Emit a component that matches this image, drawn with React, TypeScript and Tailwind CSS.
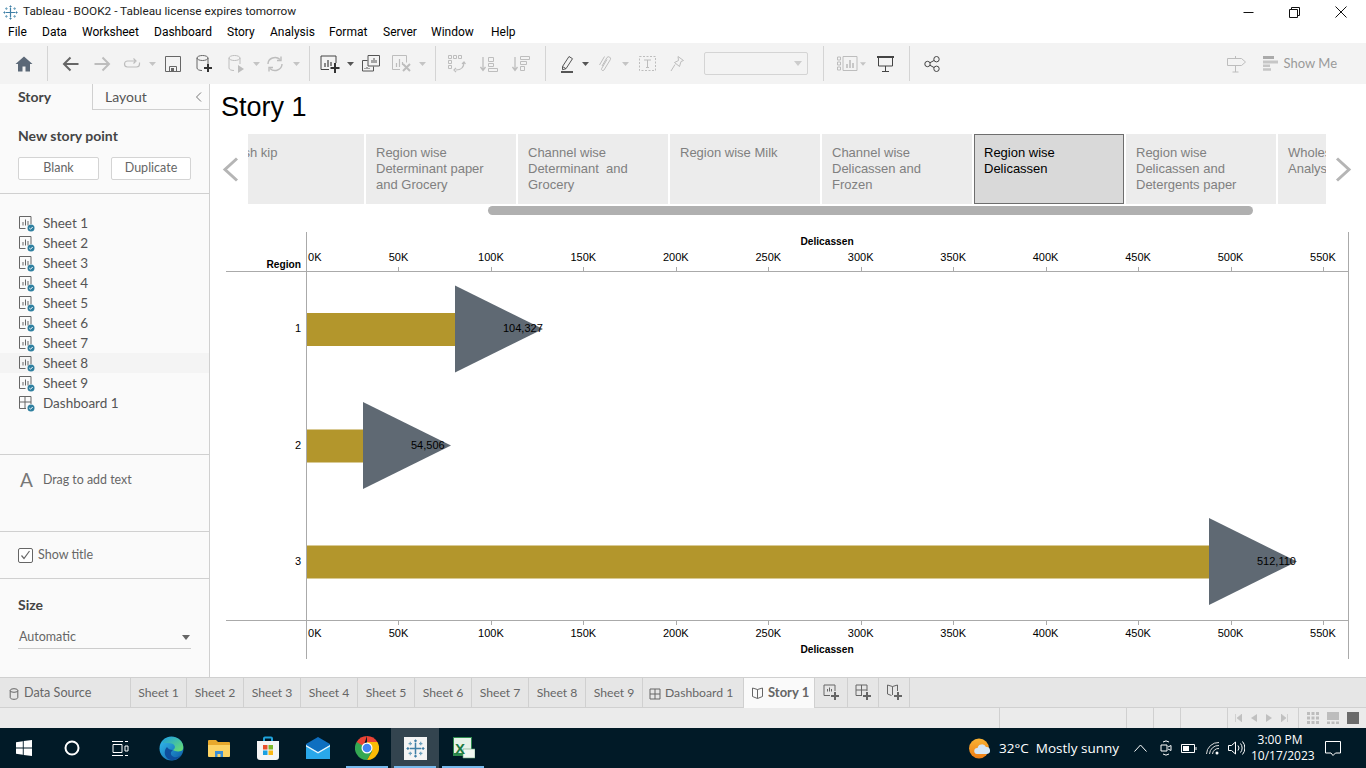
import React from 'react';

const OFF = '#bdbdbd';

const Icon: React.FC<{ w?: number; h?: number; children: React.ReactNode }> = ({ w = 24, h = 24, children }) => (
  <svg width={w} height={h} viewBox={`0 0 ${w} ${h}`} fill="none" className="block shrink-0">
    {children}
  </svg>
);

const Sep = () => <div className="w-px h-[35px] bg-[#d4d4d4] shrink-0" />;

const Drop: React.FC<{ dark?: boolean; className: string }> = ({ dark, className }) => (
  <div className={`flex justify-center items-center shrink-0 ${className}`}>
    <svg width="7" height="4" viewBox="0 0 7 4">
      <path d="M0 0h7L3.5 4z" fill={dark ? '#555' : '#c4c4c4'} />
    </svg>
  </div>
);

const Cell: React.FC<{ className: string; children?: React.ReactNode }> = ({ className, children }) => (
  <div className={`flex justify-center items-center shrink-0 ${className}`}>{children}</div>
);

const TableauLogo: React.FC<{ size: number; color?: string }> = ({ size, color = '#3f7fa6' }) => (
  <svg width={size} height={size} viewBox="0 0 20 20" className="block">
    <g stroke={color} strokeWidth="1.2">
      <path d="M10 4v12M4 10h12" strokeWidth="1.6" />
      <path d="M10 0.5v3M8.5 2h3M10 16.5v3M8.5 18h3M0.5 10h3M2 8.5v3M16.5 10h3M18 8.5v3" />
      <path d="M4.5 3v3.6M2.7 4.8h3.6M15.5 3v3.6M13.7 4.8h3.6M4.5 13.4V17M2.7 15.2h3.6M15.5 13.4V17M13.7 15.2h3.6" stroke="#6aa0bd" />
    </g>
  </svg>
);

const SheetIcon = () => (
  <svg width="17" height="17" viewBox="0 0 17 17" className="block">
    <path d="M7.5 13.5H1.5V1.5h11.5v7.5" fill="none" stroke="#666" />
    <path d="M5 7v3.5M7.5 4.5v6M10 6v4.5" stroke="#666" />
    <circle cx="13" cy="13" r="3.5" fill="#2f7f9f" />
    <path d="M11.3 13l1.2 1.2 2.2-2.2" stroke="#fff" fill="none" />
  </svg>
);

const DashIcon = () => (
  <svg width="17" height="17" viewBox="0 0 17 17" className="block">
    <path d="M8 13.5H1.5V1.5h11.5v7.5M7 1.5v12M1.5 7h11.5" fill="none" stroke="#666" />
    <circle cx="13" cy="13" r="3.5" fill="#2f7f9f" />
    <path d="M11.3 13l1.2 1.2 2.2-2.2" stroke="#fff" fill="none" />
  </svg>
);

const sideSheets = ['Sheet 1', 'Sheet 2', 'Sheet 3', 'Sheet 4', 'Sheet 5', 'Sheet 6', 'Sheet 7', 'Sheet 8', 'Sheet 9'];

const Sidebar = () => (
  <aside className="w-[210px] shrink-0 bg-[#fafafa] border-r border-[#d0d0d0] flex flex-col font-['Lato',sans-serif] text-[#555] text-[13.5px]">
    <div className="flex h-[26px] shrink-0">
      <div className="w-[92px] pl-[18px] font-bold text-[#444] leading-[26px] text-[14px]">Story</div>
      <div className="flex-1 border-l border-b border-[#d0d0d0] flex items-center justify-between pl-[12px] pr-[7px] text-[14px] text-[#555]">
        <span>Layout</span>
        <svg width="7" height="10" viewBox="0 0 7 10"><path d="M6 0.5L1.5 5 6 9.5" fill="none" stroke="#777" /></svg>
      </div>
    </div>
    <div className="h-[84px] shrink-0 border-b border-[#d0d0d0] px-[18px]">
      <div className="font-bold text-[#444] mt-[17px] leading-[18px] text-[14px]">New story point</div>
      <div className="flex gap-[12px] mt-[12px]">
        <button className="w-[81px] h-[23px] bg-white border border-[#d4d4d4] rounded-[2px] text-[12.5px] text-[#666]">Blank</button>
        <button className="w-[80px] h-[23px] bg-white border border-[#d4d4d4] rounded-[2px] text-[12.5px] text-[#666]">Duplicate</button>
      </div>
    </div>
    <div className="h-[261px] shrink-0 border-b border-[#d0d0d0] pt-[19px]">
      {sideSheets.map((s) => (
        <div key={s} className={`h-[20px] flex items-center pl-[18px] gap-[8px] ${s === 'Sheet 8' ? 'bg-[#f4f4f4]' : ''}`}>
          <SheetIcon />
          <span>{s}</span>
        </div>
      ))}
      <div className="h-[20px] flex items-center pl-[18px] gap-[8px]">
        <DashIcon />
        <span>Dashboard 1</span>
      </div>
    </div>
    <div className="h-[77px] shrink-0 border-b border-[#d0d0d0] flex items-start pl-[20px] pt-[13px] gap-[10px]">
      <span className="text-[19px] leading-[24px] text-[#777]">A</span>
      <span className="text-[12.4px] leading-[24px] text-[#666]">Drag to add text</span>
    </div>
    <div className="h-[47px] shrink-0 border-b border-[#d0d0d0] flex items-center pl-[18px] gap-[5px]">
      <div className="w-[15px] h-[15px] border border-[#666] rounded-[2px] bg-white flex items-center justify-center">
        <svg width="11" height="10" viewBox="0 0 11 10"><path d="M1.5 5.5L4 8.5 9.5 1" fill="none" stroke="#666" strokeWidth="1.2" /></svg>
      </div>
      <span className="text-[12.5px] text-[#666]">Show title</span>
    </div>
    <div className="flex-1 px-[18px]">
      <div className="font-bold text-[#444] mt-[16px] leading-[20px] text-[14px]">Size</div>
      <div className="mt-[11px] h-[23px] border-b border-[#ccc] flex items-center justify-between pl-px pr-[1px] text-[12.5px] text-[#666]">
        <span>Automatic</span>
        <svg width="8" height="5" viewBox="0 0 8 5"><path d="M0 0h8L4 5z" fill="#666" /></svg>
      </div>
    </div>
  </aside>
);

const stories = [
  'Fresh kip',
  'Region wise\nDeterminant paper\nand Grocery',
  'Channel wise\nDeterminant  and\nGrocery',
  'Region wise Milk',
  'Channel wise\nDelicassen and\nFrozen',
  'Region wise\nDelicassen',
  'Region wise\nDelicassen and\nDetergents paper',
  'Wholesale\nAnalysis',
];

const StoryNav = () => (
  <div className="flex h-[70px] font-['Liberation_Sans',sans-serif] text-[13px] leading-[16px]">
    <div className="w-[38px] shrink-0 flex items-center pl-[12px]">
      <svg width="17" height="25" viewBox="0 0 17 25"><path d="M15 1.5L3 12.5l12 11" fill="none" stroke="#b5b5b5" strokeWidth="3" /></svg>
    </div>
    <div className="w-[1078px] shrink-0 overflow-hidden flex gap-[2px]">
      {stories.map((s, i) => (
        <div
          key={s}
          className={`w-[150px] h-[70px] shrink-0 whitespace-pre overflow-hidden ${i === 0 ? '-ml-[34px]' : ''} ${
            i === 5
              ? 'bg-[#d9d9d9] border border-[#6e6e6e] text-black pt-[10px] pl-[9px]'
              : 'bg-[#ececec] text-[#808080] pt-[11px] pl-[10px]'
          }`}
        >
          {s}
        </div>
      ))}
    </div>
    <div className="w-[40px] shrink-0 flex items-center pl-[9px]">
      <svg width="17" height="25" viewBox="0 0 17 25"><path d="M2 1.5l12 11-12 11" fill="none" stroke="#b5b5b5" strokeWidth="3" /></svg>
    </div>
  </div>
);

const ticks = [0, 50, 100, 150, 200, 250, 300, 350, 400, 450, 500, 550];
const tickX = (k: number) => 306 + (k / 50) * 92.45;

const rows = [
  { label: '1', value: '104,327', y: 329, end: 455 },
  { label: '2', value: '54,506', y: 445.5, end: 363 },
  { label: '3', value: '512,110', y: 561.5, end: 1209 },
];

const Chart = () => (
  <svg viewBox="210 225 1156 452" className="block w-[1156px] h-[452px] mt-[10px]" fontFamily="'Liberation Sans', sans-serif" fill="#000">
    <path d="M306.5 232v427M1348.5 232v427M226 271.5h1123M226 620.5h1123" stroke="#aaa" fill="none" />
    <text x="827" y="245" fontSize="10.2" fontWeight="700" textAnchor="middle">Delicassen</text>
    <text x="827" y="653" fontSize="10.2" fontWeight="700" textAnchor="middle">Delicassen</text>
    <text x="301" y="268" fontSize="10.2" fontWeight="700" textAnchor="end">Region</text>
    {ticks.map((k) => {
      const x = tickX(k);
      const anchor = k === 0 ? 'start' : 'middle';
      const tx = k === 0 ? 308 : x;
      return (
        <g key={k}>
          {k > 0 && <path d={`M${Math.round(x) + 0.5} 267v4M${Math.round(x) + 0.5} 621v4`} stroke="#aaa" />}
          <text x={tx} y="261" fontSize="11" textAnchor={anchor}>{k}K</text>
          <text x={tx} y="637" fontSize="11" textAnchor={anchor}>{k}K</text>
        </g>
      );
    })}
    {rows.map((r) => (
      <g key={r.label}>
        <rect x="307" y={r.y - 16} width={r.end - 307 + 1} height="33" fill="#b3962c" />
        <path d={`M${r.end} ${r.y - 43.5}L${r.end + 88} ${r.y}L${r.end} ${r.y + 43.5}z`} fill="#5f6973" />
        <text x={r.end + 48} y={r.y + 3} fontSize="11">{r.value}</text>
        <text x="301" y={r.y + 3} fontSize="11" textAnchor="end">{r.label}</text>
      </g>
    ))}
  </svg>
);

const Toolbar = () => (
  <div className="h-[41px] bg-[#f3f3f3] flex items-center shrink-0 font-['Lato',sans-serif]">
    <Cell className="w-[47px]">
      <Icon w={18} h={16}><path d="M9 0.5L0.5 8H3v7.5h4.5V10.5h3v5H15V8h2.5z" fill="#5b6877" /></Icon>
    </Cell>
    <Sep />
    <Cell className="w-[44px]">
      <Icon w={17} h={16}><path d="M16.5 8H2M8.5 1.5L2 8l6.5 6.5" stroke="#666" strokeWidth="2" /></Icon>
    </Cell>
    <Cell className="w-[20px]">
      <Icon w={17} h={16}><path d="M0.5 8H15M8.5 1.5L15 8l-6.5 6.5" stroke={OFF} strokeWidth="2" /></Icon>
    </Cell>
    <Cell className="w-[28px] ml-[6px]">
      <Icon w={18} h={12}><path d="M12 3H4.5a3 3 0 000 6h9a3 3 0 003-3V4.5M10.5 0.5l2.5 2.5-2.5 2.5" stroke={OFF} strokeWidth="1.2" /></Icon>
    </Cell>
    <Drop className="w-[12px]" />
    <Cell className="w-[30px]">
      <Icon w={16} h={16}><path d="M0.5 0.5h15v15h-15zM4.5 15.5v-5h7v5" stroke="#666" /><rect x="6" y="12" width="3" height="3" fill="#666" /></Icon>
    </Cell>
    <Cell className="w-[34px]">
      <Icon w={18} h={18}>
        <ellipse cx="6.5" cy="3" rx="5.5" ry="2.5" stroke="#666" />
        <path d="M1 3v10c0 1.4 2 2.5 5 2.5M12 3v6" stroke="#666" />
        <path d="M12 9v8M8 13h8" stroke="#333" strokeWidth="2" />
      </Icon>
    </Cell>
    <Cell className="w-[28px]">
      <Icon w={17} h={18}>
        <ellipse cx="6.5" cy="3" rx="5.5" ry="2.5" stroke={OFF} />
        <path d="M1 3v10c0 1.4 2 2.5 5 2.5M12 3v6" stroke={OFF} />
        <path d="M10 10l6 4-6 4z" fill={OFF} />
      </Icon>
    </Cell>
    <Drop className="w-[12px]" />
    <Cell className="w-[26px]">
      <Icon w={18} h={16}><path d="M2 8a7 6.5 0 0112-4.5M16 8a7 6.5 0 01-12 4.5" stroke={OFF} strokeWidth="1.4" /><path d="M15 0.5v4h-4M3 15.5v-4h4" stroke={OFF} strokeWidth="1.4" /></Icon>
    </Cell>
    <Drop className="w-[16px]" />
    <div className="w-[5px] shrink-0" />
    <Sep />
    <Cell className="w-[30px] ml-[5px]">
      <Icon w={21} h={18}>
        <path d="M9 14.5H1V1h15v7" stroke="#444" />
        <path d="M5 8v4M8 5v7M11 7v4" stroke="#444" strokeWidth="1.2" />
        <path d="M15 8v10M10.5 13h9" stroke="#333" strokeWidth="2" />
      </Icon>
    </Cell>
    <Drop dark className="w-[10px]" />
    <Cell className="w-[32px]">
      <Icon w={18} h={17}>
        <path d="M6 0.5h11.5v10.5H6zM0.5 5.5h5M0.5 5.5v10.5h11v-4.5" stroke="#555" />
        <path d="M10 8V5M12 8V3M14 8V5M3 13v1M5 12v2M7 13v1" stroke="#555" />
      </Icon>
    </Cell>
    <Cell className="w-[30px]">
      <Icon w={20} h={17}>
        <path d="M8 14.5H0.5V0.5h14v7" stroke={OFF} />
        <path d="M4.5 8v4M7.5 4v8M10.5 7v3" stroke={OFF} strokeWidth="1.2" />
        <path d="M11 9l7 7M18 9l-7 7" stroke={OFF} strokeWidth="2" />
      </Icon>
    </Cell>
    <Drop className="w-[10px]" />
    <div className="w-[8px] shrink-0" />
    <Sep />
    <Cell className="w-[42px]">
      <Icon w={18} h={18}>
        <path d="M0.5 0.5h3v3h-3zM5.5 0.5h3v3h-3zM10.5 0.5h3v3h-3zM0.5 5.5h3v3h-3zM0.5 10.5h3v3h-3z" stroke={OFF} />
        <path d="M16 7c0 5-3 8-8 8M8 13l-2 2 2 2M14 9l2-2 1.5 2" stroke={OFF} strokeWidth="1.2" />
      </Icon>
    </Cell>
    <Cell className="w-[22px]">
      <Icon w={18} h={16}>
        <path d="M3 1v13M0.5 11L3 14.5 5.5 11" stroke={OFF} strokeWidth="1.3" />
        <path d="M8.5 1.5h5v4h-5zM8.5 7.5h5v3h-5zM8.5 12.5h9v3h-9z" stroke={OFF} />
      </Icon>
    </Cell>
    <Cell className="w-[42px]">
      <Icon w={18} h={16}>
        <path d="M3 1v13M0.5 11L3 14.5 5.5 11" stroke={OFF} strokeWidth="1.3" />
        <path d="M8.5 0.5h9v3h-9zM8.5 5.5h6v3h-6zM8.5 10.5h4v4h-4z" stroke={OFF} />
      </Icon>
    </Cell>
    <div className="w-[3px] shrink-0" />
    <Sep />
    <Cell className="w-[26px] ml-[9px]">
      <Icon w={14} h={18}>
        <path d="M1.5 11.5L8 1.5l3.5 2.2-6.5 10-3.5 1z" stroke="#555" />
        <path d="M1.5 11.5l3.5 2.2" stroke="#555" />
        <path d="M0 17h12" stroke="#555" strokeWidth="2" />
      </Icon>
    </Cell>
    <Drop dark className="w-[8px]" />
    <Cell className="w-[32px]">
      <Icon w={14} h={17}>
        <path d="M4 11l5-8.5a2 2 0 013.4 2L6 15a1.4 1.4 0 01-2.4-1.4L9 4.5M1.5 10L6.5 1.5" stroke={OFF} />
      </Icon>
    </Cell>
    <Drop className="w-[8px]" />
    <Cell className="w-[36px]">
      <Icon w={17} h={15}>
        <path d="M0.5 0.5h16v14h-16z" stroke={OFF} strokeDasharray="2 1.5" />
        <path d="M5 4h7M8.5 4v7.5M7 11.5h3" stroke={OFF} />
      </Icon>
    </Cell>
    <Cell className="w-[24px]">
      <Icon w={14} h={16}>
        <path d="M8 0.5l5.5 4-2.5 1-1.5 5-5-4 4-2zM5 8.5L1 15" stroke={OFF} />
      </Icon>
    </Cell>
    <div className="ml-[15px] w-[104px] h-[23px] shrink-0 border border-[#d4d4d4] rounded-[2px] flex items-center justify-end pr-[5px]">
      <svg width="8" height="5" viewBox="0 0 8 5"><path d="M0 0h8L4 5z" fill="#ccc" /></svg>
    </div>
    <div className="w-[15px] shrink-0" />
    <Sep />
    <Cell className="w-[26px] ml-[10px]">
      <Icon w={21} h={15}>
        <path d="M0.5 1h3v3h-3zM0.5 6h3v3h-3zM0.5 11h3v3h-3zM6 0.5h14v14H6z" stroke={OFF} />
        <path d="M10 12V8M13 12V4M16 12V7" stroke={OFF} strokeWidth="1.6" />
      </Icon>
    </Cell>
    <Drop className="w-[6px]" />
    <Cell className="w-[38px]">
      <Icon w={17} h={16}>
        <path d="M0 1h17" stroke="#444" strokeWidth="2" />
        <path d="M1.5 2v8h14V2M8.5 10v5.500M5 15.500h7" stroke="#444" />
      </Icon>
    </Cell>
    <div className="w-[5px] shrink-0" />
    <Sep />
    <Cell className="w-[44px]">
      <Icon w={16} h={16}>
        <circle cx="3.5" cy="8" r="2.7" stroke="#444" />
        <circle cx="12.5" cy="3.2" r="2.7" stroke="#444" />
        <circle cx="12.5" cy="12.8" r="2.7" stroke="#444" />
        <path d="M6 6.7l4-2.2M6 9.3l4 2.2" stroke="#444" />
      </Icon>
    </Cell>
    <div className="flex-1" />
    <Icon w={19} h={18}>
      <path d="M0.5 3.5h14l4 3.5-4 3.5h-14zM8.5 1v2.5M8.5 10.5V17M5.5 17h6" stroke={OFF} />
    </Icon>
    <div className="w-[17px] shrink-0" />
    <Icon w={15} h={15}>
      <path d="M0 1.5h11" stroke="#aaa" strokeWidth="3" />
      <path d="M0 6h15" stroke="#c6c6c6" strokeWidth="3" />
      <path d="M0 9.8h7M0 13.5h8" stroke="#c6c6c6" strokeWidth="2.6" />
    </Icon>
    <span className="ml-[6px] mr-[29px] text-[13px] text-[#9a9a9a]">Show Me</span>
  </div>
);

const Menu = () => (
  <div className="h-[22px] flex items-center pl-[8px] bg-white text-[12px] text-black font-['Roboto',sans-serif] shrink-0">
    <span className="w-[34px]">File</span>
    <span className="w-[40px]">Data</span>
    <span className="w-[72px]">Worksheet</span>
    <span className="w-[73px]">Dashboard</span>
    <span className="w-[43px]">Story</span>
    <span className="w-[59px]">Analysis</span>
    <span className="w-[54px]">Format</span>
    <span className="w-[48px]">Server</span>
    <span className="w-[60px]">Window</span>
    <span>Help</span>
  </div>
);

const TitleBar = () => (
  <div className="h-[21px] flex items-center bg-white shrink-0 pt-[3px]">
    <div className="ml-[3px]"><TableauLogo size={15} /></div>
    <span className="ml-[5px] text-[11.8px] text-[#222] font-['Roboto',sans-serif]">Tableau - BOOK2 - Tableau license expires tomorrow</span>
    <div className="flex-1" />
    <Icon w={11} h={11}><path d="M0.5 5.5h10" stroke="#111" /></Icon>
    <div className="w-[35px] shrink-0" />
    <Icon w={11} h={11}><path d="M0.5 2.5h8v8h-8zM2.5 2.5v-2h8v8h-2" stroke="#111" /></Icon>
    <div className="w-[35px] shrink-0" />
    <Icon w={12} h={12}><path d="M0.5 0.5l11 11M11.5 0.5l-11 11" stroke="#111" /></Icon>
    <div className="w-[19px] shrink-0" />
  </div>
);

const tabSheets = ['Sheet 1', 'Sheet 2', 'Sheet 3', 'Sheet 4', 'Sheet 5', 'Sheet 6', 'Sheet 7', 'Sheet 8', 'Sheet 9'];

const TabBar = () => (
  <div className="h-[31px] bg-[#e6e6e6] border-y border-[#d0d0d0] flex shrink-0 font-['Lato',sans-serif] text-[12.2px] text-[#666]">
    <div className="w-[130px] shrink-0 flex items-center pl-[9px] pt-[2px] gap-[5px] text-[12.6px]">
      <svg width="10" height="12" viewBox="0 0 10 12"><ellipse cx="5" cy="2.5" rx="3.8" ry="1.8" fill="none" stroke="#666" /><path d="M1.2 2.5v7c0 1 1.6 1.8 3.8 1.8s3.8-.8 3.8-1.8v-7" fill="none" stroke="#666" /></svg>
      <span>Data Source</span>
    </div>
    {tabSheets.map((s, i) => (
      <div key={s} className={`${i === 0 ? 'w-[56px]' : 'w-[57px]'} shrink-0 border-l border-[#d0d0d0] flex items-center justify-center pt-[2px]`}>
        {s}
      </div>
    ))}
    <div className="w-[101px] shrink-0 border-l border-[#d0d0d0] flex items-center pl-[6px] pt-[2px] gap-[4px]">
      <svg width="12" height="12" viewBox="0 0 12 12"><path d="M1 1h10v10H1zM6 1v10M1 6h10" fill="none" stroke="#666" /></svg>
      <span>Dashboard 1</span>
    </div>
    <div className="w-[71px] shrink-0 bg-[#fafafa] flex items-center pl-[7px] gap-[4px] font-bold text-[13px] -mb-px border-l border-[#d0d0d0]">
      <svg width="13" height="12" viewBox="0 0 13 12"><path d="M6.5 2.5L1.5 1v8.5l5 2 5-2V1zM6.5 2.5v9" fill="none" stroke="#666" /></svg>
      <span>Story 1</span>
    </div>
    <div className="w-[33px] shrink-0 border-l border-[#d0d0d0] flex items-center justify-center">
      <Icon w={17} h={17}><path d="M7 11.5H1V1h11v6" stroke="#666" /><path d="M4.5 7.5V5M6.5 7.5V3.5M8.5 7.5V5" stroke="#666" /><path d="M12 8v8M8 12h8" stroke="#666" strokeWidth="2" /></Icon>
    </div>
    <div className="w-[31px] shrink-0 border-l border-[#d0d0d0] flex items-center justify-center">
      <Icon w={17} h={17}><path d="M7 11.5H1V1h11v6M6.5 1v10.5M1 6h11" stroke="#666" /><path d="M12 8v8M8 12h8" stroke="#666" strokeWidth="2" /></Icon>
    </div>
    <div className="w-[32px] shrink-0 border-x border-[#d0d0d0] flex items-center justify-center">
      <Icon w={17} h={17}><path d="M6.5 2.5L1.5 1v9l4 1.5M6.5 2.5L11.5 1v6M6.5 2.5V11" stroke="#666" /><path d="M12 8v8M8 12h8" stroke="#666" strokeWidth="2" /></Icon>
    </div>
  </div>
);

const StatusBar = () => (
  <div className="h-[20px] bg-[#ebebeb] flex justify-end shrink-0">
    <div className="w-[127px] border-l border-[#d0d0d0]" />
    <div className="w-[27px] border-l border-[#d0d0d0]" />
    <div className="w-[27px] border-l border-[#d0d0d0]" />
    <div className="w-[47px] border-l border-[#d0d0d0]" />
    <div className="w-[71px] border-l border-[#d0d0d0] flex items-center pl-[7px] gap-[9px]">
      <Icon w={7} h={8}><path d="M0.5 0v8M7 0v8L2 4z" fill="#c0c0c0" stroke="#c0c0c0" strokeWidth="0.6" /></Icon>
      <Icon w={6} h={8}><path d="M6 0v8L0 4z" fill="#c0c0c0" /></Icon>
      <Icon w={6} h={8}><path d="M0 0v8l6-4z" fill="#c0c0c0" /></Icon>
      <Icon w={7} h={8}><path d="M6.5 0v8M0 0v8l5-4z" fill="#c0c0c0" stroke="#c0c0c0" strokeWidth="0.6" /></Icon>
    </div>
    <div className="w-[68px] border-l border-[#d0d0d0] flex items-center pl-[8px] gap-[8px]">
      <Icon w={12} h={12}>
        <path d="M0 0h3v3H0zM4.5 0h3v3h-3zM9 0h3v3H9zM0 4.500h3v3H0zM4.500 4.500h3v3h-3zM9 4.500h3v3H9zM0 9h3v3H0zM4.500 9h3v3h-3zM9 9h3v3H9z" fill="#bdbdbd" />
      </Icon>
      <Icon w={12} h={12}><path d="M0 0h12v8H0zM0 9.500h3V12H0zM4.500 9.500h3V12h-3zM9 9.500h3V12H9z" fill="#bdbdbd" /></Icon>
      <Icon w={12} h={12}><rect width="12" height="12" fill="#6b6b6b" /></Icon>
    </div>
  </div>
);

const TaskIcon: React.FC<{ className?: string; bar?: boolean; children: React.ReactNode }> = ({ className = '', bar, children }) => (
  <div className={`relative w-[48px] h-[40px] flex items-center justify-center shrink-0 ${className}`}>
    {children}
    {bar && <div className="absolute bottom-0 left-[3px] right-[3px] h-[2px] bg-[#76b9ed]" />}
  </div>
);

const Taskbar = () => (
  <div className="h-[40px] bg-[#011a27] flex items-center shrink-0 text-white font-['Open_Sans',sans-serif]">
    <TaskIcon>
      <Icon w={16} h={16}><path d="M0 2.300l6.800-1v6.200H0zM7.700 1.100L16 0v7.500H7.700zM0 8.500h6.800v6.200L0 13.700zM7.700 8.500H16V16l-8.300-1.100z" fill="#fff" /></Icon>
    </TaskIcon>
    <TaskIcon>
      <Icon w={16} h={16}><circle cx="8" cy="8" r="6.500" stroke="#fff" strokeWidth="2" /></Icon>
    </TaskIcon>
    <TaskIcon>
      <Icon w={17} h={15}>
        <path d="M0 0.500h11M0 14.500h11M1 3.500h9v8H1z" stroke="#fff" />
        <path d="M13 0.500h3M13 5h3v5h-3zM13 14.500h3" stroke="#fff" />
      </Icon>
    </TaskIcon>
    <TaskIcon className="ml-[3px]">
      <svg width="25" height="25" viewBox="0 0 25 25" className="block">
        <defs>
          <linearGradient id="edgeA" x1="0" y1="0" x2="1" y2="1">
            <stop offset="0" stopColor="#35c1f1" />
            <stop offset="1" stopColor="#0c59a4" />
          </linearGradient>
          <linearGradient id="edgeB" x1="0" y1="0" x2="1" y2="1">
            <stop offset="0" stopColor="#1b9de2" />
            <stop offset="1" stopColor="#6ce06a" />
          </linearGradient>
        </defs>
        <circle cx="12.500" cy="12.500" r="12" fill="url(#edgeA)" />
        <path d="M3 6C7 0 17-1 22 5c3 4 3 9 0 10-3 1-7 0-8-1 2-1 3-4 0-6-4-2-9 0-11-2z" fill="url(#edgeB)" />
        <path d="M14 14c-3 2-3 6 1 7 2 .5 5 0 7-2-3 5-10 7-14 3-3-3-3-8 0-11 1 2 3 3 6 3z" fill="#0f4f9e" />
      </svg>
    </TaskIcon>
    <TaskIcon>
      <svg width="22" height="18" viewBox="0 0 22 18" className="block">
        <path d="M0 2a1 1 0 011-1h7l2 2h11a1 1 0 011 1v13H0z" fill="#e7a92c" />
        <path d="M0 6h22v11a1 1 0 01-1 1H1a1 1 0 01-1-1z" fill="#fcd465" />
        <path d="M7 18v-6h8v6h-2.500v-3h-3v3z" fill="#3c8fd6" />
      </svg>
    </TaskIcon>
    <TaskIcon className="ml-[1px]">
      <svg width="24" height="24" viewBox="0 0 24 24" className="block">
        <path d="M8 5V2.500a1 1 0 011-1h6a1 1 0 011 1V5" fill="none" stroke="#1fa3dc" strokeWidth="2" />
        <path d="M1 5h22v16a3 3 0 01-3 3H4a3 3 0 01-3-3z" fill="#f5f5f5" />
        <rect x="7" y="9" width="4.500" height="4.500" fill="#e8502c" />
        <rect x="12.500" y="9" width="4.500" height="4.500" fill="#7db928" />
        <rect x="7" y="14.500" width="4.500" height="4.500" fill="#1ba1e2" />
        <rect x="12.500" y="14.500" width="4.500" height="4.500" fill="#fcb813" />
      </svg>
    </TaskIcon>
    <TaskIcon className="ml-[2px]">
      <svg width="24" height="22" viewBox="0 0 24 22" className="block">
        <path d="M0 7l12-7 12 7v15H0z" fill="#0e6fc0" />
        <path d="M0 8l12 7 12-7v14H0z" fill="#29a8ea" />
        <path d="M0 8l12 7 12-7v1.500L12 16.500 0 9.500z" fill="#e9f4fb" />
      </svg>
    </TaskIcon>
    <TaskIcon bar className="ml-[1px]">
      <svg width="24" height="24" viewBox="0 0 24 24" className="block">
        <path d="M12 12L12 0a12 12 0 0110.400 6z" fill="#ea4335" />
        <path d="M12 0A12 12 0 001.600 6L6.800 15z" fill="#ea4335" />
        <path d="M1.600 6A12 12 0 0012 24l5.200-9z" fill="#34a853" />
        <path d="M22.400 6H12l5.200 9L12 24A12 12 0 0022.400 6z" fill="#fbbc05" />
        <circle cx="12" cy="12" r="5.500" fill="#fff" />
        <circle cx="12" cy="12" r="4.300" fill="#4285f4" />
      </svg>
    </TaskIcon>
    <TaskIcon bar className="bg-[#33444f]">
      <div className="w-[23px] h-[23px] bg-[#f4f4f4] flex items-center justify-center">
        <TableauLogo size={19} />
      </div>
    </TaskIcon>
    <TaskIcon bar>
      <svg width="24" height="23" viewBox="0 0 24 23" className="block">
        <path d="M2 0h19v19H2z" fill="#2e8b4f" />
        <path d="M3 1h17v15H3z" fill="#e6f2e8" />
        <path d="M12 12h12v9H12z" fill="#f2f7f2" stroke="#6aa77d" strokeWidth="0.6" />
        <text x="4" y="17" fontSize="15" fontWeight="700" fill="#1e7a41" fontFamily="'Liberation Sans', sans-serif">X</text>
      </svg>
    </TaskIcon>
    <div className="flex-1" />
    <svg width="22" height="21" viewBox="0 0 22 21" className="block shrink-0">
      <defs>
        <linearGradient id="sun" x1="0" y1="0" x2="0" y2="1">
          <stop offset="0" stopColor="#f9b233" />
          <stop offset="1" stopColor="#ee7d14" />
        </linearGradient>
      </defs>
      <circle cx="10" cy="10.500" r="10" fill="url(#sun)" />
      <path d="M8 16a3 3 0 01.500-6 4.500 4.500 0 018.500-1 3.500 3.500 0 011 7z" fill="#d5e6f5" />
    </svg>
    <span className="ml-[8px] text-[13.5px]">32°C</span>
    <span className="ml-[7px] text-[13.5px]">Mostly sunny</span>
    <div className="w-[15px] shrink-0" />
    <Icon w={13} h={8}><path d="M0.500 7.500l6-6.500 6 6.500" stroke="#fff" /></Icon>
    <div className="w-[13px] shrink-0" />
    <Icon w={12} h={16}>
      <path d="M3 2a5 5 0 016 0M3 14a5 5 0 006 0" stroke="#fff" />
      <path d="M1 5h6v6H1zM8 7l3-1.500v5L8 9" stroke="#fff" />
    </Icon>
    <div className="w-[9px] shrink-0" />
    <Icon w={16} h={9}><path d="M0.500 0.500h13v8h-13z" stroke="#fff" /><path d="M2 2h6v5H2z" fill="#fff" /><path d="M15 3v3" stroke="#fff" /></Icon>
    <div className="w-[9px] shrink-0" />
    <Icon w={14} h={13}>
      <path d="M0.500 12A12 12 0 0113 0.500M3.500 12a9 9 0 019.500-8.500M6.500 12a6 6 0 016.500-5.500" stroke="#ddd" />
      <circle cx="11" cy="11" r="1.500" fill="#fff" />
    </Icon>
    <div className="w-[8px] shrink-0" />
    <Icon w={17} h={14}>
      <path d="M0.500 4.500h3L7.500 1v12l-4-3.500h-3z" stroke="#fff" />
      <path d="M10 4.500a4 4 0 010 5M12.500 2.500a7 7 0 010 9M14.500 0.500a10 10 0 010 13" stroke="#fff" />
    </Icon>
    <div className="ml-[6px] w-[58px] text-center text-[12px] leading-[16px] shrink-0">
      <div>3:00 PM</div>
      <div className="whitespace-nowrap">10/17/2023</div>
    </div>
    <div className="w-[16px] shrink-0" />
    <Icon w={16} h={15}><path d="M0.500 0.500h15v11.500h-5l-2.500 2.500L6 12H0.500z" stroke="#fff" /></Icon>
    <div className="w-[25px] shrink-0" />
  </div>
);

export default function App() {
  return (
    <div className="w-[1366px] h-[768px] overflow-hidden flex flex-col bg-white">
      <TitleBar />
      <Menu />
      <Toolbar />
      <div className="flex h-[593px] shrink-0">
        <Sidebar />
        <main className="flex-1 flex flex-col bg-white">
          <div className="h-[50px] shrink-0 pl-[11px] pt-[5px] text-[27px] leading-[36px] text-black font-['Liberation_Sans',sans-serif]">Story 1</div>
          <StoryNav />
          <div className="mt-[2px] ml-[278px] w-[765px] h-[9px] rounded-[5px] bg-[#b0b0b0] shrink-0" />
          <Chart />
        </main>
      </div>
      <TabBar />
      <StatusBar />
      <Taskbar />
    </div>
  );
}
